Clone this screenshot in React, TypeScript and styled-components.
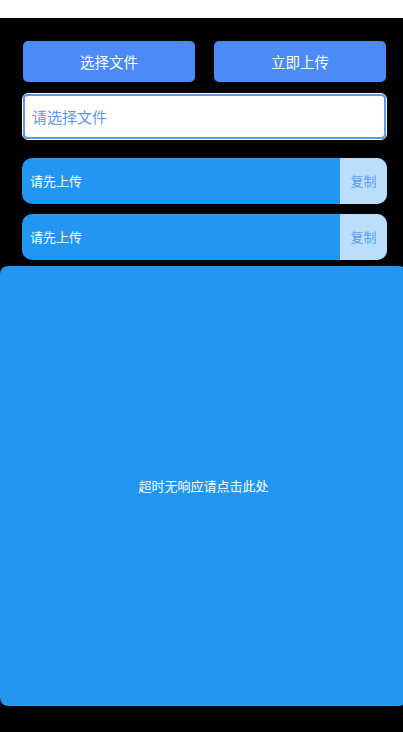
import React from 'react';
import styled, { createGlobalStyle } from 'styled-components';

const GlobalStyle = createGlobalStyle`
  html, body {
    margin: 0;
    padding: 0;
    background: #ffffff;
    overflow: hidden;
  }
  body {
    font-family: "Noto Sans CJK SC", "Noto Sans", sans-serif;
  }
`;

const Page = styled.div`
  margin-top: 18px;
  height: 714px;
  background: #000000;
  padding-top: 23px;
  box-sizing: border-box;
  display: flex;
  flex-direction: column;
`;

const ButtonRow = styled.div`
  display: flex;
  gap: 19px;
  padding: 0 17px 0 23px;
`;

const ActionButton = styled.button`
  flex: 1;
  height: 41px;
  border: none;
  border-radius: 5px;
  background: #4b8bf9;
  color: #ffffff;
  font-family: inherit;
  font-size: 14.5px;
  padding: 0;
`;

const FileInput = styled.input`
  margin: 12px 17px 0 23px;
  height: 45px;
  box-sizing: border-box;
  border: 2px solid #5b96f7;
  outline: 1px solid #ffffff;
  outline-offset: 0;
  border-radius: 5px;
  background: #ffffff;
  padding: 0 7px;
  font-family: inherit;
  font-size: 15px;
  &::placeholder {
    color: #5b96f7;
  }
`;

const LinkRow = styled.div`
  display: flex;
  height: 46px;
  margin: ${p => (p.$first ? '19px' : '10px')} 16px 0 22px;
  border-radius: 10px;
  overflow: hidden;
  background: #2196f3;
`;

const LinkText = styled.div`
  flex: 1;
  display: flex;
  align-items: center;
  padding: 0 0 2px 8px;
  color: #ffffff;
  font-size: 13px;
`;

const CopyButton = styled.div`
  width: 47px;
  display: flex;
  align-items: center;
  justify-content: center;
  padding-bottom: 2px;
  background: #bbdefb;
  color: #5c9cf5;
  font-size: 13px;
`;

const TimeoutPanel = styled.div`
  margin-top: 6px;
  width: calc(100% + 4px);
  height: 440px;
  box-sizing: border-box;
  padding-bottom: 2px;
  border-radius: 8px;
  background: #2196f3;
  display: flex;
  align-items: center;
  justify-content: center;
  color: #ffffff;
  font-size: 13px;
`;

export default function App() {
  return (
    <>
      <GlobalStyle />
      <Page>
        <ButtonRow>
          <ActionButton>选择文件</ActionButton>
          <ActionButton>立即上传</ActionButton>
        </ButtonRow>
        <FileInput placeholder="请选择文件" readOnly />
        <LinkRow $first>
          <LinkText>请先上传</LinkText>
          <CopyButton>复制</CopyButton>
        </LinkRow>
        <LinkRow>
          <LinkText>请先上传</LinkText>
          <CopyButton>复制</CopyButton>
        </LinkRow>
        <TimeoutPanel>超时无响应请点击此处</TimeoutPanel>
      </Page>
    </>
  );
}
